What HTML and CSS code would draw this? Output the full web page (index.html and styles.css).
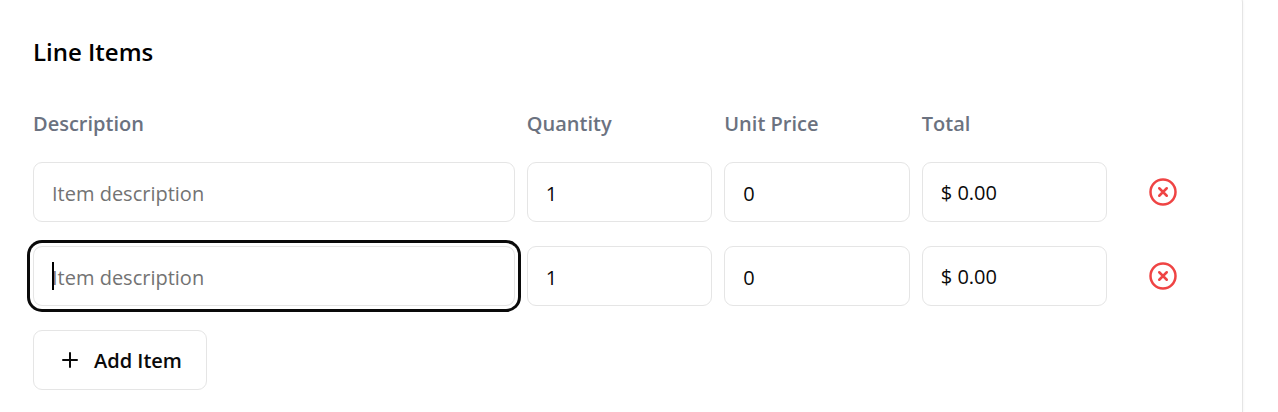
FILE: index.html
```html
<!DOCTYPE html>
<html lang="en">
<head>
<meta charset="utf-8">
<meta name="viewport" content="width=device-width, initial-scale=1">
<title>Line Items</title>
<link rel="stylesheet" href="styles.css">
</head>
<body>
<form class="card">
  <h2 class="title">Line Items</h2>
  <div class="row head">
    <label class="label wide" id="l-desc" for="desc-1">Description</label>
    <label class="label" id="l-qty" for="qty-1">Quantity</label>
    <label class="label" id="l-price" for="price-1">Unit Price</label>
    <label class="label" id="l-total" for="total-1">Total</label>
  </div>
  <div class="row">
    <div class="cell wide"><input class="field" id="desc-1" type="text" placeholder="Item description"></div>
    <input class="field" id="qty-1" type="number" value="1">
    <input class="field" id="price-1" type="number" value="0">
    <output class="field" id="total-1">$ 0.00</output>
    <button class="remove" type="button" aria-label="Remove item 1">
      <svg class="remove-icon" viewBox="0 0 24 24"><circle cx="12" cy="12" r="10"/><path d="m15 9-6 6M9 9l6 6"/></svg>
    </button>
  </div>
  <div class="row">
    <div class="cell wide">
      <input class="field focused" id="desc-2" type="text" placeholder="Item description" aria-labelledby="l-desc">
      <span class="caret"></span>
    </div>
    <input class="field" id="qty-2" type="number" value="1" aria-labelledby="l-qty">
    <input class="field" id="price-2" type="number" value="0" aria-labelledby="l-price">
    <output class="field" id="total-2" aria-labelledby="l-total">$ 0.00</output>
    <button class="remove" type="button" aria-label="Remove item 2">
      <svg class="remove-icon" viewBox="0 0 24 24"><circle cx="12" cy="12" r="10"/><path d="m15 9-6 6M9 9l6 6"/></svg>
    </button>
  </div>
  <button class="add" type="button">
    <svg class="add-icon" viewBox="0 0 24 24"><path d="M5 12h14M12 5v14"/></svg>
    <span class="add-text">Add Item</span>
  </button>
</form>
</body>
</html>
```
FILE: styles.css
```css
* {
  box-sizing: border-box;
}

body {
  margin: 0;
  background: #fff;
  color: #0a0a0a;
  font-family: "Segoe UI", "Open Sans", "Noto Sans", sans-serif;
  font-size: 20px;
  line-height: 28px;
}

.card {
  display: flex;
  flex-direction: column;
  align-items: stretch;
  gap: 24px;
  margin: -9px 35px 0 -4px;
  padding: 42px 36px 22px;
  border: 1px solid #e5e5e5;
  border-bottom: 0;
  border-radius: 12px 12px 0 0;
  box-shadow: 0 1px 3px rgba(0, 0, 0, 0.06);
}

.title {
  margin: 0 0 16px;
  color: #000;
  font-size: 24px;
  font-weight: 600;
  line-height: 36px;
}

.row {
  display: grid;
  grid-template-columns: repeat(12, minmax(0, 1fr));
  column-gap: 12px;
  align-items: center;
}

.label {
  grid-column: span 2;
  color: #6b7280;
  font-weight: 600;
}

.field {
  grid-column: span 2;
  display: block;
  width: 100%;
  min-width: 0;
  height: 60px;
  margin: 0;
  padding: 16px 18px 14px;
  border: 1px solid #e5e5e5;
  border-radius: 9px;
  outline: none;
  background: #fff;
  color: #0a0a0a;
  font: inherit;
  appearance: textfield;
}

.field::placeholder {
  color: #737373;
  opacity: 1;
}

.wide {
  grid-column: span 5;
}

.cell {
  position: relative;
}

.focused {
  box-shadow: 0 0 0 3px #fff, 0 0 0 6px #0a0a0a;
}

.caret {
  position: absolute;
  top: 16px;
  left: 19px;
  width: 2px;
  height: 28px;
  background: #000;
}

.remove {
  display: flex;
  justify-content: center;
  align-items: center;
  height: 60px;
  padding: 0;
  border: 0;
  background: none;
  color: #ef4444;
}

.remove-icon,
.add-icon {
  width: 30px;
  height: 30px;
  fill: none;
  stroke: currentColor;
  stroke-width: 2;
  stroke-linecap: round;
}

.add {
  display: flex;
  align-items: center;
  align-self: flex-start;
  gap: 12px;
  height: 60px;
  padding: 0 24px;
  border: 1px solid #e5e5e5;
  border-radius: 9px;
  background: #fff;
  color: #0a0a0a;
  font: inherit;
  font-weight: 600;
}

.add-text {
  padding-top: 2px;
}

.add-icon {
  width: 24px;
  height: 24px;
}
```
